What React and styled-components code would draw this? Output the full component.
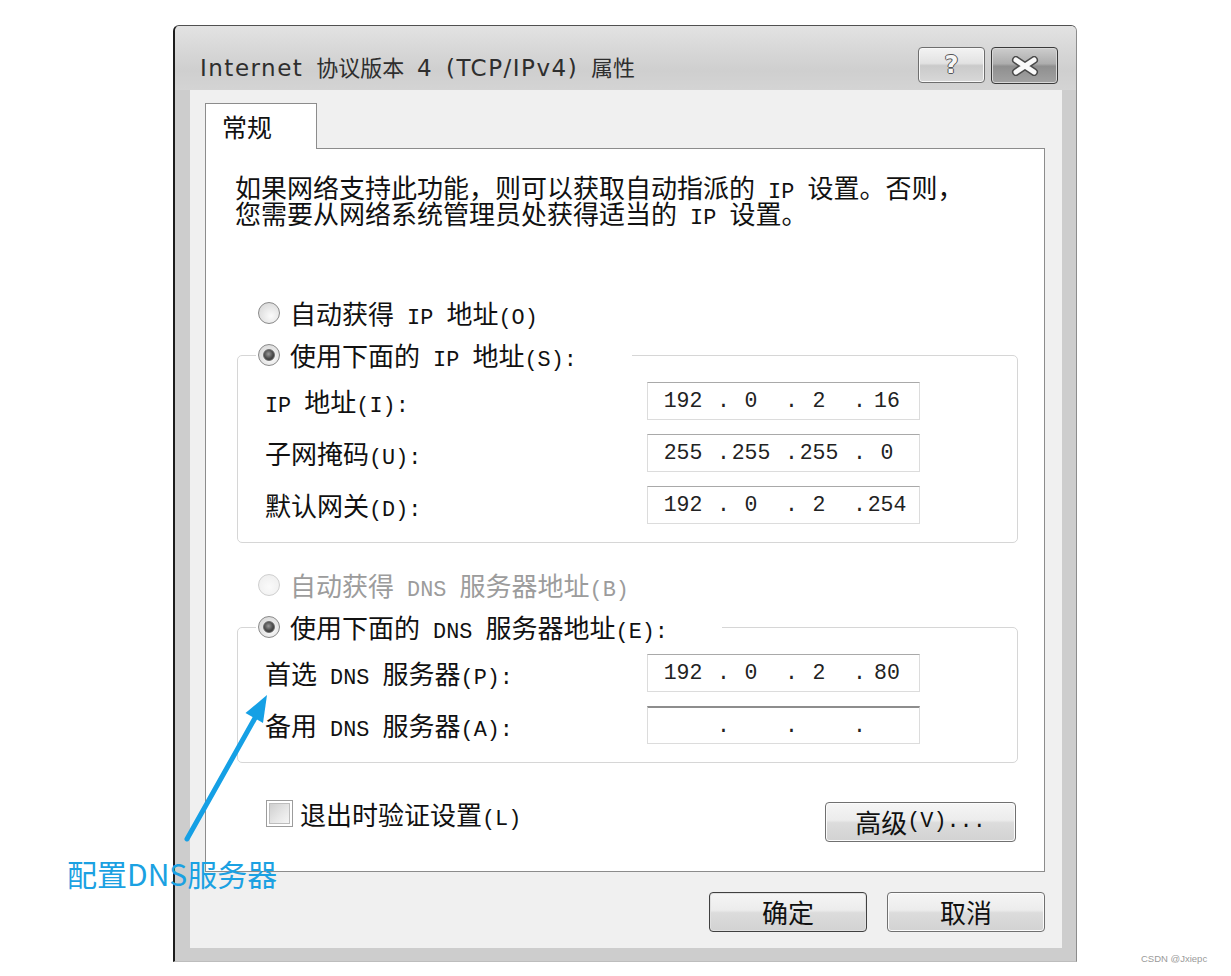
import React from "react"
import styled, { createGlobalStyle } from "styled-components"

const GlobalStyle = createGlobalStyle`
  html, body {
    margin: 0;
    padding: 0;
    background: #fff;
  }
  body {
    font-family: "Noto Sans CJK SC", "Noto Sans", sans-serif;
  }
`

const ipRows = [
    { label: "IP 地址(I):", octets: ["192", "0", "2", "16"] },
    { label: "子网掩码(U):", octets: ["255", "255", "255", "0"] },
    { label: "默认网关(D):", octets: ["192", "0", "2", "254"] },
]

const dnsRows = [
    { label: "首选 DNS 服务器(P):", octets: ["192", "0", "2", "80"] },
    { label: "备用 DNS 服务器(A):", octets: ["", "", "", ""], empty: true },
]

const Page = styled.div`
    position: relative;
    width: 1231px;
    height: 976px;
    padding: 25px 0 0 173px;
    box-sizing: border-box;
    overflow: hidden;
`

const Window = styled.div`
    width: 904px;
    height: 937px;
    box-sizing: border-box;
    border-left: 2px solid #1c1c1c;
    border-top: 1px solid #505050;
    border-right: 1px solid #8c8c8c;
    border-bottom: 1px solid #bdbdbd;
    border-radius: 6px 6px 0 0;
    background: #cdcdcd;
    display: flex;
    flex-direction: column;
`

const TitleBar = styled.div`
    height: 64px;
    box-sizing: border-box;
    padding: 22px 18px 0 25px;
    display: flex;
    align-items: flex-start;
    justify-content: space-between;
    background: linear-gradient(180deg, #e3e3e3 0%, #d8d8d8 35%, #cfcfcf 70%, #d4d4d4 100%);
    border-radius: 5px 5px 0 0;
`

const Title = styled.div`
    margin-top: 3px;
    font-family: "DejaVu Sans", "Noto Sans CJK SC", sans-serif;
    font-size: 23px;
    line-height: 30px;
    color: #2e2e2e;
    letter-spacing: 1.5px;
    word-spacing: 4px;
    white-space: pre;
`

const TitleCjk = styled.span`
    font-family: "Noto Sans CJK SC", sans-serif;
    font-size: 22px;
    letter-spacing: 0;
`

const CaptionButtons = styled.div`
    display: flex;
    gap: 6px;
    margin-top: -1px;
`

const HelpButton = styled.div`
    width: 67px;
    height: 36px;
    box-sizing: border-box;
    border: 1px solid #6e6e6e;
    border-radius: 4px;
    background: linear-gradient(180deg, #f3f3f3 0%, #e2e2e2 45%, #cacaca 52%, #d8d8d8 100%);
    box-shadow: inset 0 0 0 1px #f8f8f8;
    display: flex;
    align-items: center;
    justify-content: center;
    font-family: "DejaVu Sans", sans-serif;
    font-weight: bold;
    font-size: 24px;
    color: #f6f6f6;
    text-shadow: -1px 0 #555, 1px 0 #555, 0 -1px #555, 0 1px #555;
`

const CloseButton = styled.div`
    width: 67px;
    height: 37px;
    box-sizing: border-box;
    border: 1px solid #3a3a3a;
    border-radius: 4px;
    background: linear-gradient(180deg, #cdcdcd 0%, #adadad 45%, #8f8f8f 52%, #a2a2a2 100%);
    box-shadow: inset 0 0 0 1px #d8d8d8;
    display: flex;
    align-items: center;
    justify-content: center;
`

const Client = styled.div`
    flex: 1;
    margin: 0 14px 13px 15px;
    background: #f0f0f0;
    padding: 13px 17px 16px 15px;
    display: flex;
    flex-direction: column;
`

const TabStrip = styled.div`
    display: flex;
`

const Tab = styled.div`
    position: relative;
    z-index: 1;
    width: 112px;
    height: 46px;
    box-sizing: border-box;
    margin-bottom: -1px;
    border: 1px solid #8c8c8c;
    border-bottom: none;
    background: #fff;
    padding: 4px 0 0 16px;
    font-size: 25px;
    line-height: 36px;
    color: #111;
`

const Panel = styled.div`
    flex: 1;
    border: 1px solid #8c8c8c;
    background: #fff;
    padding: 25px 26px 0 31px;
    display: flex;
    flex-direction: column;
    color: #111;
    font-size: 26px;
`

const Intro = styled.p`
    margin: 0 0 0 -2px;
    line-height: 26px;
`

const Latin = styled.span`
    font-family: "Liberation Mono", monospace;
    font-size: 0.84em;
    line-height: 0;
    white-space: pre;
`

const RadioRow = styled.div`
    display: flex;
    align-items: center;
    gap: 10px;
    height: 42px;
    padding-left: 21px;
    margin-top: ${p => p.$top}px;
    line-height: 26px;
    color: ${p => (p.$disabled ? "#9c9c9c" : "#111")};
`

const RadioDot = styled.span`
    flex: none;
    width: 22px;
    height: 22px;
    box-sizing: border-box;
    border-radius: 50%;
    border: 1px solid ${p => (p.$disabled ? "#cfcfcf" : "#8a8a8a")};
    background: ${p =>
        p.$disabled
            ? "radial-gradient(circle at 50% 60%, #fafafa 0%, #ececec 100%)"
            : "radial-gradient(circle at 60% 65%, #fbfbfb 0%, #dedede 70%, #cfcfcf 100%)"};
    display: flex;
    align-items: center;
    justify-content: center;

    &::after {
        content: "";
        display: ${p => (p.$checked ? "block" : "none")};
        width: 12px;
        height: 12px;
        border-radius: 50%;
        border: 1px solid #6d6d6d;
        box-sizing: border-box;
        background: radial-gradient(circle at 45% 40%, #9a9a9a 0%, #4a4a4a 55%, #2a2a2a 100%);
    }
`

const Group = styled.fieldset`
    margin: 0;
    min-inline-size: 0;
    border: 1px solid #d6d6d6;
    border-radius: 5px;
    padding: 0 0 18px 18px;
`

const Legend = styled.legend`
    width: ${p => p.$w}px;
    height: 42px;
    box-sizing: border-box;
    padding: 0 0 0 2px;
    display: flex;
    align-items: center;
    gap: 10px;
    line-height: 26px;
`

const Fields = styled.div`
    margin: 6px 0 0 9px;
    display: flex;
    flex-direction: column;
    gap: 14px;
`

const FieldRow = styled.div`
    display: grid;
    grid-template-columns: 382px 273px;
    align-items: center;
    height: 38px;
    line-height: 26px;
`

const IpBox = styled.div`
    height: 38px;
    box-sizing: border-box;
    border: 1px solid #dcdcdc;
    border-top: ${p => (p.$empty ? "2px solid #8d8d8d" : "1px solid #a9a9a9")};
    background: #fff;
    padding-left: 1px;
    display: grid;
    grid-template-columns: repeat(4, 68px);
    align-items: center;
`

const Octet = styled.div`
    display: grid;
    grid-template-columns: 12px 1fr 12px;
    align-items: center;
    font-family: "Liberation Mono", monospace;
    font-size: 21.5px;
    line-height: 24px;
    color: #222;
`

const OctetDot = styled.span`
    text-align: center;
`

const OctetValue = styled.span`
    text-align: center;
`

const Footer = styled.div`
    margin-top: 37px;
    display: flex;
    justify-content: space-between;
    align-items: flex-start;
    padding: 0 2px 0 29px;
`

const CheckLabel = styled.div`
    display: flex;
    align-items: center;
    gap: 7px;
    height: 27px;
    line-height: 26px;
`

const CheckBox = styled.span`
    width: 27px;
    height: 27px;
    box-sizing: border-box;
    border: 1px solid #9c9c9c;
    padding: 2px;
    background: #fff;

    &::after {
        content: "";
        display: block;
        width: 100%;
        height: 100%;
        border: 1px solid #bdbdbd;
        box-sizing: border-box;
        background: linear-gradient(135deg, #cfcfcf 0%, #e6e6e6 55%, #f6f6f6 100%);
    }
`

const Button = styled.div`
    width: ${p => p.$w}px;
    height: 40px;
    margin-top: ${p => p.$top || 0}px;
    box-sizing: border-box;
    border: 1px solid ${p => (p.$default ? "#404040" : "#707070")};
    border-radius: 4px;
    background: linear-gradient(180deg, #f5f5f5 0%, #ececec 45%, #dcdcdc 52%, #d2d2d2 100%);
    box-shadow: inset 0 0 0 1px ${p => (p.$default ? "#e0e0e0" : "#fbfbfb")};
    display: flex;
    align-items: center;
    justify-content: center;
    font-size: 26px;
    line-height: 26px;
    color: #111;
`

const DialogButtons = styled.div`
    margin-top: 20px;
    display: flex;
    justify-content: flex-end;
    gap: 20px;
`

const ArrowSvg = styled.svg`
    position: absolute;
    left: 180px;
    top: 690px;
`

const Callout = styled.div`
    position: absolute;
    left: 67px;
    top: 855px;
    font-family: "Noto Sans CJK SC", sans-serif;
    font-size: 30px;
    line-height: 36px;
    color: #1ba1e2;
    white-space: nowrap;
`

const Watermark = styled.div`
    position: absolute;
    left: 1141px;
    top: 953px;
    font-family: "Liberation Sans", sans-serif;
    font-size: 9.5px;
    color: #9a9a9a;
`

const isAscii = s => /^[\x20-\x7e]+$/.test(s)
const runs = text => text.split(/([\x20-\x7e]+)/).filter(Boolean)

const Mixed = ({ text }) =>
    runs(text).map((s, i) =>
        isAscii(s) ? <Latin key={i}>{s}</Latin> : <React.Fragment key={i}>{s}</React.Fragment>
    )

const TitleText = ({ text }) =>
    runs(text).map((s, i) =>
        isAscii(s) ? <React.Fragment key={i}>{s}</React.Fragment> : <TitleCjk key={i}>{s}</TitleCjk>
    )

const IpField = ({ octets, empty }) => (
    <IpBox $empty={empty}>
        {octets.map((o, i) => (
            <Octet key={i}>
                <OctetDot>{i > 0 ? "." : ""}</OctetDot>
                <OctetValue>{o}</OctetValue>
            </Octet>
        ))}
    </IpBox>
)

const FieldList = ({ rows }) => (
    <Fields>
        {rows.map(r => (
            <FieldRow key={r.label}>
                <span><Mixed text={r.label} /></span>
                <IpField octets={r.octets} empty={r.empty} />
            </FieldRow>
        ))}
    </Fields>
)

const App = () => {
    return (
        <>
            <GlobalStyle />
            <Page>
                <Window>
                    <TitleBar>
                        <Title><TitleText text="Internet 协议版本 4 (TCP/IPv4) 属性" /></Title>
                        <CaptionButtons>
                            <HelpButton>?</HelpButton>
                            <CloseButton>
                                <svg width="30" height="20" viewBox="0 0 30 20">
                                    <path d="M6 4 L24 16 M24 4 L6 16" stroke="#4a4a4a" strokeWidth="8" strokeLinecap="round" />
                                    <path d="M6 4 L24 16 M24 4 L6 16" stroke="#fafafa" strokeWidth="5" strokeLinecap="round" />
                                </svg>
                            </CloseButton>
                        </CaptionButtons>
                    </TitleBar>
                    <Client>
                        <TabStrip>
                            <Tab>常规</Tab>
                        </TabStrip>
                        <Panel>
                            <Intro>
                                <Mixed text="如果网络支持此功能，则可以获取自动指派的 IP 设置。否则，" />
                                <br />
                                <Mixed text="您需要从网络系统管理员处获得适当的 IP 设置。" />
                            </Intro>

                            <RadioRow $top={66}>
                                <RadioDot />
                                <span><Mixed text="自动获得 IP 地址(O)" /></span>
                            </RadioRow>
                            <Group>
                                <Legend $w={376}>
                                    <RadioDot $checked />
                                    <span><Mixed text="使用下面的 IP 地址(S):" /></span>
                                </Legend>
                                <FieldList rows={ipRows} />
                            </Group>

                            <RadioRow $top={21} $disabled>
                                <RadioDot $disabled />
                                <span><Mixed text="自动获得 DNS 服务器地址(B)" /></span>
                            </RadioRow>
                            <Group>
                                <Legend $w={466}>
                                    <RadioDot $checked />
                                    <span><Mixed text="使用下面的 DNS 服务器地址(E):" /></span>
                                </Legend>
                                <FieldList rows={dnsRows} />
                            </Group>

                            <Footer>
                                <CheckLabel>
                                    <CheckBox />
                                    <span><Mixed text="退出时验证设置(L)" /></span>
                                </CheckLabel>
                                <Button $w={191} $top={2}><Mixed text="高级(V)..." /></Button>
                            </Footer>
                        </Panel>
                        <DialogButtons>
                            <Button $w={158} $default>确定</Button>
                            <Button $w={158}>取消</Button>
                        </DialogButtons>
                    </Client>
                </Window>

                <ArrowSvg width="100" height="160" viewBox="0 0 100 160">
                    <path d="M7 149 L75 28" stroke="#15a0e5" strokeWidth="5" strokeLinecap="round" />
                    <polygon points="87,5 83,33 65.5,23" fill="#15a0e5" />
                </ArrowSvg>
                <Callout>配置DNS服务器</Callout>
                <Watermark>CSDN @Jxiepc</Watermark>
            </Page>
        </>
    )
}

export default App
